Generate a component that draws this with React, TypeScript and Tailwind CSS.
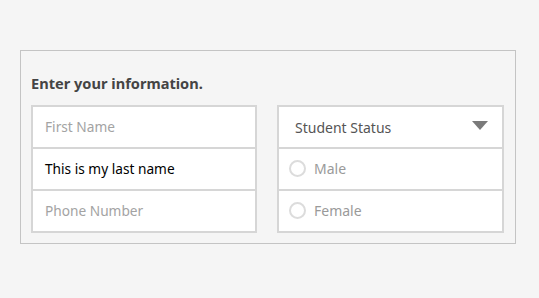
const Radio = ({ label }: { label: string }) => (
  <label className="flex h-[40px] items-center gap-[8px] px-[10px] pb-[1px] text-[14px] text-[#9a9a9a]">
    <span className="h-[17px] w-[17px] rounded-full border-2 border-[#dcdcdc] bg-white" />
    {label}
  </label>
);

export default function App() {
  return (
    <div className="min-h-[298px] bg-[#f5f5f5] px-[20px] pt-[50px] font-['Noto_Sans',sans-serif]">
      <form className="w-[496px] border border-[#c4c4c4] bg-[#f5f5f5] px-[10px] pb-[10px] pt-[22px]">
        <h2 className="mb-[12px] text-[14.6px] leading-[20px] font-bold text-[#444]">
          Enter your information.
        </h2>
        <div className="grid grid-cols-[226px_227px] gap-[20px]">
          {/* Text inputs */}
          <div className="flex flex-col border-2 border-[#d6d6d6] bg-white">
            <div className="flex h-[40px] items-center px-[12px] text-[13.7px] text-[#a3a3a3]">
              First Name
            </div>
            <div className="flex h-[42px] items-center border-t-2 border-[#d6d6d6] px-[12px] text-[13.7px] text-black">
              This is my last name
            </div>
            <div className="flex h-[42px] items-center border-t-2 border-[#d6d6d6] px-[12px] text-[13.7px] text-[#a3a3a3]">
              Phone Number
            </div>
          </div>

          {/* Status + gender */}
          <div className="flex flex-col border-2 border-[#d6d6d6] bg-white">
            <div className="flex h-[40px] items-center justify-between pl-[16px] pr-[14px] text-[14px] text-[#555]">
              <span className="pt-[1px]">Student Status</span>
              <svg width="16" height="9" viewBox="0 0 16 9" className="-mt-[3px]">
                <path d="M0 0h16L8 9z" fill="#7a7a7a" />
              </svg>
            </div>
            <div className="border-t-2 border-[#d6d6d6]">
              <Radio label="Male" />
            </div>
            <div className="border-t-2 border-[#d6d6d6]">
              <Radio label="Female" />
            </div>
          </div>
        </div>
      </form>
    </div>
  );
}
